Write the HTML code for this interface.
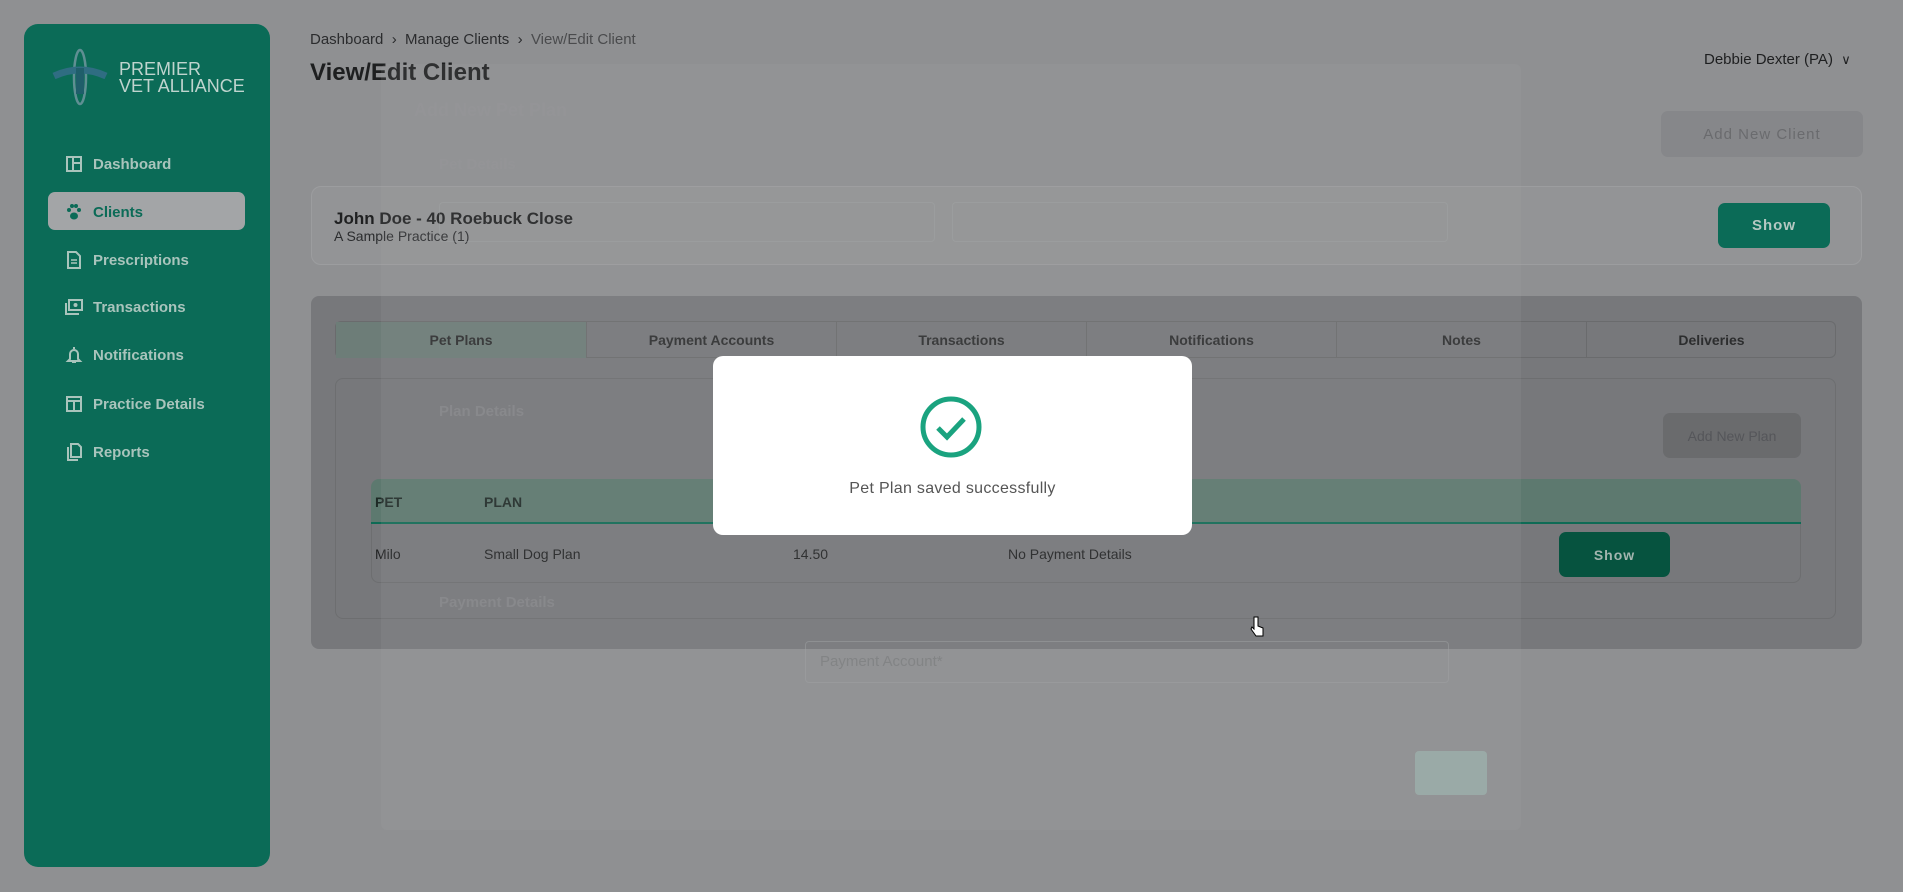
<!DOCTYPE html>
<html><head><meta charset="utf-8"><style>
*{box-sizing:border-box;margin:0;padding:0}
body{width:1920px;height:892px;overflow:hidden;background:#8f9092;font-family:"Liberation Sans",sans-serif;position:relative}
.abs{position:absolute}
.side{left:24px;top:24px;width:246px;height:843px;background:#0b6b57;border-radius:14px}
.nav{position:absolute;left:68px;color:#a9c4bc;font-size:15px;font-weight:bold;display:flex;align-items:center;gap:10px}
.nav svg{width:18px;height:18px}
.sel{left:48px;top:192px;width:197px;height:38px;background:#a3a5a7;border-radius:7px}
.btn{border-radius:7px;display:flex;align-items:center;justify-content:center;font-size:15px;font-weight:bold;letter-spacing:1px}
.tab{position:absolute;top:0;height:36px;display:flex;align-items:center;justify-content:center;font-size:14px;font-weight:bold;color:#2c2d2e;border-left:1px solid #6a6b6d}
.faint{color:rgba(150,151,153,.45);font-size:15px;position:absolute}
</style></head><body>
<div class="abs" style="right:0;top:0;width:17px;height:892px;background:#fff"></div>
<div class="abs side"></div>
<svg class="abs" style="left:50px;top:48px" width="64" height="58" viewBox="0 0 64 58">
<ellipse cx="30" cy="29" rx="6" ry="27" fill="none" stroke="#5f8f93" stroke-width="2.5"/>
<path d="M4 28 Q30 16 56 28" stroke="#2f6d82" stroke-width="7" fill="none"/>
<rect x="26" y="20" width="8" height="26" fill="#1f5e6a"/>
</svg>
<div class="abs" style="left:119px;top:61px;color:#bfd4ce;font-size:18px;line-height:17px">PREMIER<br>VET ALLIANCE</div>
<div class="abs sel"></div>
<div class="nav" style="top:155px;left:65px"><svg viewBox="0 0 18 18"><rect x="2" y="2" width="14" height="14" fill="none" stroke="#a9c4bc" stroke-width="2"/><path d="M8 2v14M8 8h8" stroke="#a9c4bc" stroke-width="2"/></svg>Dashboard</div>
<div class="nav" style="top:203px;left:65px;color:#0b6b57"><svg viewBox="0 0 18 18"><circle cx="4" cy="7" r="2" fill="#0b6b57"/><circle cx="14" cy="7" r="2" fill="#0b6b57"/><circle cx="7" cy="3" r="2" fill="#0b6b57"/><circle cx="11" cy="3" r="2" fill="#0b6b57"/><ellipse cx="9" cy="13" rx="4" ry="3.5" fill="#0b6b57"/></svg>Clients</div>
<div class="nav" style="top:251px;left:65px"><svg viewBox="0 0 18 18"><path d="M3 1h8l4 4v12H3z" fill="none" stroke="#a9c4bc" stroke-width="2"/><path d="M6 9h6M6 12h6" stroke="#a9c4bc" stroke-width="1.5"/></svg>Prescriptions</div>
<div class="nav" style="top:298px;left:65px"><svg viewBox="0 0 18 18"><rect x="4" y="2" width="13" height="10" fill="none" stroke="#a9c4bc" stroke-width="2"/><path d="M1 5v11h13" stroke="#a9c4bc" stroke-width="2" fill="none"/><circle cx="10.5" cy="7" r="2" fill="#a9c4bc"/></svg>Transactions</div>
<div class="nav" style="top:346px;left:65px"><svg viewBox="0 0 18 18"><path d="M5 13V8a4 4 0 0 1 8 0v5l2 2H3z" fill="none" stroke="#a9c4bc" stroke-width="2"/><path d="M9 1v2M7 16h4" stroke="#a9c4bc" stroke-width="2"/></svg>Notifications</div>
<div class="nav" style="top:395px;left:65px"><svg viewBox="0 0 18 18"><rect x="2" y="2" width="14" height="14" fill="none" stroke="#a9c4bc" stroke-width="2"/><path d="M2 6h14M9 6v10" stroke="#a9c4bc" stroke-width="2"/></svg>Practice Details</div>
<div class="nav" style="top:443px;left:65px"><svg viewBox="0 0 18 18"><path d="M6 1h7l3 3v10H6z M3 4v13h10" fill="none" stroke="#a9c4bc" stroke-width="2"/></svg>Reports</div>

<div class="abs" style="left:310px;top:31px;font-size:15px;color:#2b2c2e">Dashboard &nbsp;› &nbsp;Manage Clients &nbsp;›&nbsp; <span style="color:#4a4b4d">View/Edit Client</span></div>
<div class="abs" style="left:310px;top:59px;font-size:24px;font-weight:bold;color:#1e1f20">View/Edit Client</div>
<div class="abs" style="left:1704px;top:51px;font-size:15px;color:#1e1f20">Debbie Dexter (PA) &nbsp;<span style="font-size:13px">&#x2228;</span></div>
<div class="abs btn" style="left:1661px;top:111px;width:202px;height:46px;background:#86878a;color:#6a6b6e;font-weight:normal">Add New Client</div>

<div class="abs" style="left:311px;top:186px;width:1551px;height:79px;background:#939496;border:1px solid #9c9d9f;border-radius:10px"></div>
<div class="abs" style="left:334px;top:209px;font-size:17px;font-weight:bold;color:#1f2021">John Doe - 40 Roebuck Close</div>
<div class="abs" style="left:334px;top:228px;font-size:14px;color:#2b2c2e">A Sample Practice (1)</div>
<div class="abs btn" style="left:1718px;top:203px;width:112px;height:45px;background:#0b6b57;color:#b5c8c2">Show</div>

<div class="abs" style="left:311px;top:296px;width:1551px;height:353px;background:#77787b;border-radius:8px"></div>
<div class="abs" style="left:335px;top:321px;width:1501px;height:37px;border:1px solid #6a6b6d;border-radius:6px;background:#77787b">
<div class="tab" style="left:0;width:250px;background:#6d7d78;border-left:none">Pet Plans</div>
<div class="tab" style="left:250px;width:250px">Payment Accounts</div>
<div class="tab" style="left:500px;width:250px">Transactions</div>
<div class="tab" style="left:750px;width:250px">Notifications</div>
<div class="tab" style="left:1000px;width:250px">Notes</div>
<div class="tab" style="left:1250px;width:250px">Deliveries</div>
</div>
<div class="abs" style="left:335px;top:378px;width:1501px;height:241px;border:1px solid #6d6e70;border-radius:8px"></div>
<div class="abs btn" style="left:1663px;top:413px;width:138px;height:45px;background:#6a6b6d;color:#55565a;font-weight:normal;font-size:14px;letter-spacing:0">Add New Plan</div>
<div class="abs" style="left:371px;top:479px;width:1430px;height:45px;background:#5d796f;border-bottom:2px solid #0e6b55;border-radius:8px 8px 0 0"></div>
<div class="abs" style="left:375px;top:494px;font-size:14px;font-weight:bold;color:#1e2a26">PET</div>
<div class="abs" style="left:484px;top:494px;font-size:14px;font-weight:bold;color:#1e2a26">PLAN</div>
<div class="abs" style="left:371px;top:524px;width:1430px;height:59px;border:1px solid #6d6e70;border-top:none;border-radius:0 0 8px 8px"></div>
<div class="abs" style="left:375px;top:546px;font-size:14px;color:#1f2021">Milo</div>
<div class="abs" style="left:484px;top:546px;font-size:14px;color:#1f2021">Small Dog Plan</div>
<div class="abs" style="left:793px;top:546px;font-size:14px;color:#1f2021">14.50</div>
<div class="abs" style="left:1008px;top:546px;font-size:14px;color:#1f2021">No Payment Details</div>
<div class="abs btn" style="left:1559px;top:532px;width:111px;height:45px;background:#06533f;color:#a3b5af;font-size:14px">Show</div>

<!-- faint background modal (translucent overlay) -->
<div class="abs" style="left:381px;top:64px;width:1140px;height:766px;background:rgba(170,171,173,.12);border-radius:6px"></div>
<div class="faint" style="left:414px;top:100px;font-size:18px;font-weight:bold">Add New Pet Plan</div>
<div class="faint" style="left:439px;top:156px;font-weight:bold">Pet Details</div>
<div class="faint" style="left:439px;top:403px;font-weight:bold">Plan Details</div>
<div class="faint" style="left:439px;top:594px;font-weight:bold">Payment Details</div>
<div class="abs" style="left:439px;top:202px;width:496px;height:40px;border:1px solid rgba(170,171,173,.3);border-radius:4px"></div>
<div class="abs" style="left:952px;top:202px;width:496px;height:40px;border:1px solid rgba(170,171,173,.3);border-radius:4px"></div>
<div class="abs" style="left:805px;top:641px;width:644px;height:42px;border:1px solid rgba(160,161,163,.5);border-radius:4px"></div>
<div class="faint" style="left:820px;top:653px;color:rgba(120,121,123,.6)">Payment Account*</div>
<div class="abs" style="left:1415px;top:751px;width:72px;height:44px;background:rgba(170,215,200,.35);border-radius:4px"></div>

<!-- success modal -->
<div class="abs" style="left:713px;top:356px;width:479px;height:179px;background:#fff;border-radius:10px"></div>
<svg class="abs" style="left:919px;top:395px" width="64" height="64" viewBox="0 0 64 64"><circle cx="32" cy="32" r="28" fill="none" stroke="#1aa37f" stroke-width="5"/><path d="M19 33l9 9 17-18" fill="none" stroke="#1aa37f" stroke-width="5"/></svg>
<div class="abs" style="left:713px;top:480px;width:479px;text-align:center;font-size:16px;color:#555;letter-spacing:.3px">Pet Plan saved successfully</div>
<svg class="abs" style="left:1250px;top:616px" width="14" height="22" viewBox="0 0 14 22"><path d="M4 1v12l-2-2-1 2 5 7h7v-8l-5-2V1z" fill="#fff" stroke="#000"/></svg>
</body></html>
